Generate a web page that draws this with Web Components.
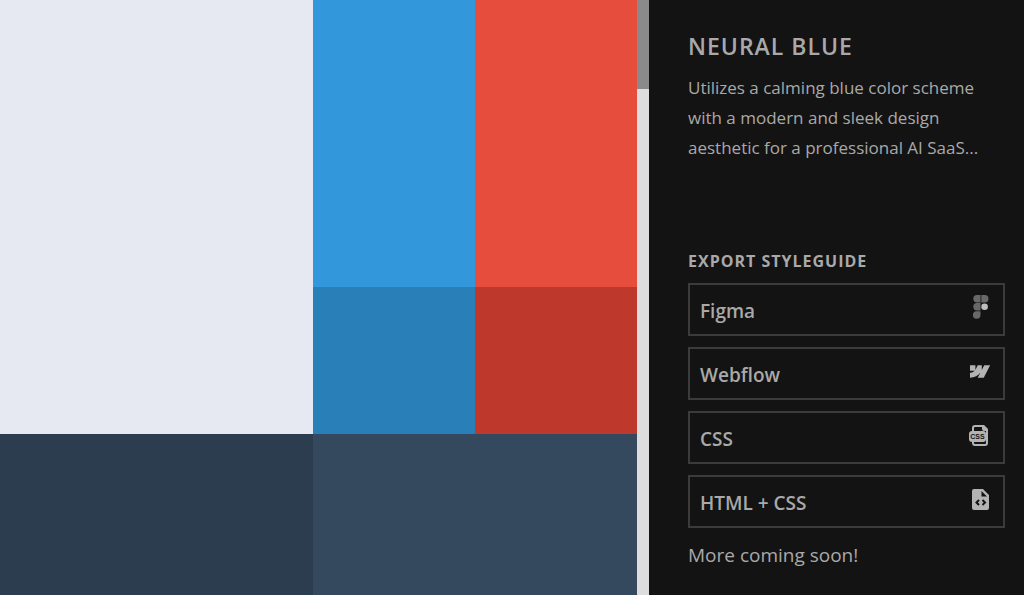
<!DOCTYPE html>
<html lang="en">
<head>
<meta charset="utf-8">
<meta name="viewport" content="width=device-width, initial-scale=1">
<title>Neural Blue</title>
<style>
  html, body { margin: 0; min-height: 100%; background: #131313; }
  body { font-family: "Open Sans", "Noto Sans", sans-serif; color: #a9a9a9; }
</style>
</head>
<body>
<style-guide></style-guide>
<script>
  const define = (name, html) => {
    const template = document.createElement("template");
    template.innerHTML = html;
    customElements.define(name, class extends HTMLElement {
      constructor() {
        super();
        this.attachShadow({ mode: "open" }).append(template.content.cloneNode(true));
      }
    });
  };

  define("color-palette", `
    <style>
      :host { display: grid; grid-template-columns: 313fr 162fr 162fr; grid-template-rows: 287fr 147fr 161fr; }
      .surface { grid-row: span 2; background: #e6e9f2; }
      .primary { background: #3398db; }
      .accent { background: #e74d3c; }
      .primary-dark { background: #2980b9; }
      .accent-dark { background: #be392b; }
      .ink { background: #2c3d50; }
      .ink-light { grid-column: span 2; background: #34495e; }
    </style>
    <div class="surface"></div>
    <div class="primary"></div>
    <div class="accent"></div>
    <div class="primary-dark"></div>
    <div class="accent-dark"></div>
    <div class="ink"></div>
    <div class="ink-light"></div>`);

  define("scroll-track", `
    <style>
      :host { display: block; background: #dcdddc; }
      .thumb { height: 15%; background: #8a8a8a; }
    </style>
    <div class="thumb"></div>`);

  define("export-button", `
    <style>
      :host { display: block; }
      button {
        display: flex; justify-content: space-between; align-items: flex-start;
        box-sizing: border-box; width: 100%; height: 53px; padding: 8px 11px 7px 10px;
        border: 2px solid #3b3b3b; border-radius: 0; background: transparent;
        color: inherit; font: 600 19px/36px "Open Sans", "Noto Sans", sans-serif; cursor: pointer;
      }
      button:hover { border-color: #666; }
      ::slotted(svg) { display: block; width: 24px; height: 28px; }
    </style>
    <button type="button"><span><slot></slot></span><slot name="icon"></slot></button>`);

  define("theme-summary", `
    <style>
      :host { display: block; }
      h1 { margin: 0; font-size: 23px; line-height: 30px; font-weight: 600; letter-spacing: 1px; text-transform: uppercase; }
      p { margin: 12px 0 0; font-size: 17px; line-height: 30px; }
    </style>
    <h1><slot name="title"></slot></h1>
    <p><slot></slot></p>`);

  define("export-panel", `
    <style>
      :host { display: flex; flex-direction: column; gap: 11px; }
      h2 { margin: 0; font-size: 16px; line-height: 22px; font-weight: 700; letter-spacing: 1px; text-transform: uppercase; }
      p { margin: 0; font-size: 19px; line-height: 32px; }
    </style>
    <h2>Export Styleguide</h2>
    <export-button>Figma
      <svg slot="icon" viewBox="0 0 24 28" aria-hidden="true">
        <path fill="#686868" d="M12.500 2H9a3.700 3.700 0 0 0 0 7.400h3.500zM13.300 2h3.500a3.700 3.700 0 0 1 0 7.400h-3.500zM12.500 10.100H9a3.700 3.700 0 0 0 0 7.400h3.500zM12.500 18.200H9a3.800 3.800 0 1 0 3.500 3.800z"/>
        <circle cx="16.600" cy="13.700" r="3.300" fill="#bdbdbd"/>
      </svg>
    </export-button>
    <export-button>Webflow
      <svg slot="icon" viewBox="0 0 24 28" aria-hidden="true">
        <path fill="#b3b3b3" transform="translate(2 4.500) scale(.84)" d="M24 4.515l-7.658 14.970H9.149l3.205-6.204h-.144C9.566 16.713 5.621 18.973 0 19.485v-6.118s3.596-.213 5.710-2.435H0V4.515h6.417v5.278l.144-.001 2.622-5.277h4.854v5.244h.144l2.720-5.244z"/>
      </svg>
    </export-button>
    <export-button>CSS
      <svg slot="icon" viewBox="0 0 24 28" aria-hidden="true">
        <path fill="none" stroke="#b3b3b3" stroke-width="2" stroke-linejoin="round" d="M5 10V7a2 2 0 0 1 2-2h8l4 4v13a2 2 0 0 1-2 2H7a2 2 0 0 1-2-2v-2"/>
        <path fill="#b3b3b3" d="M14 4h2l4 4v2h-4a2 2 0 0 1-2-2z"/>
        <rect x="1" y="10" width="17" height="11" rx="3" fill="#b3b3b3"/>
        <text x="9.500" y="18" text-anchor="middle" font-family="Liberation Sans, sans-serif" font-weight="700" font-size="7" fill="#131313">CSS</text>
      </svg>
    </export-button>
    <export-button>HTML + CSS
      <svg slot="icon" viewBox="0 0 24 28" aria-hidden="true">
        <path fill="#b3b3b3" fill-rule="evenodd" d="M6 4h9l6 6v13a2 2 0 0 1-2 2H6a2 2 0 0 1-2-2V6a2 2 0 0 1 2-2zm7.500 2v5.500H19z"/>
        <path fill="none" stroke="#131313" stroke-width="2" d="M11 15l-2.500 2.500L11 20M14.500 15l2.500 2.500-2.500 2.500"/>
      </svg>
    </export-button>
    <p>More coming soon!</p>`);

  define("style-guide", `
    <style>
      :host { display: grid; grid-template-columns: minmax(0, 1fr) 12px 375px; min-height: 100vh; }
      aside { display: flex; flex-direction: column; gap: 87px; box-sizing: border-box; padding: 31px 19px 20px 39px; background: #131313; }
    </style>
    <color-palette></color-palette>
    <scroll-track></scroll-track>
    <aside>
      <theme-summary><span slot="title">Neural Blue</span>Utilizes a calming blue color scheme with a modern and sleek design aesthetic for a professional AI SaaS...</theme-summary>
      <export-panel></export-panel>
    </aside>`);
</script>
</body>
</html>
